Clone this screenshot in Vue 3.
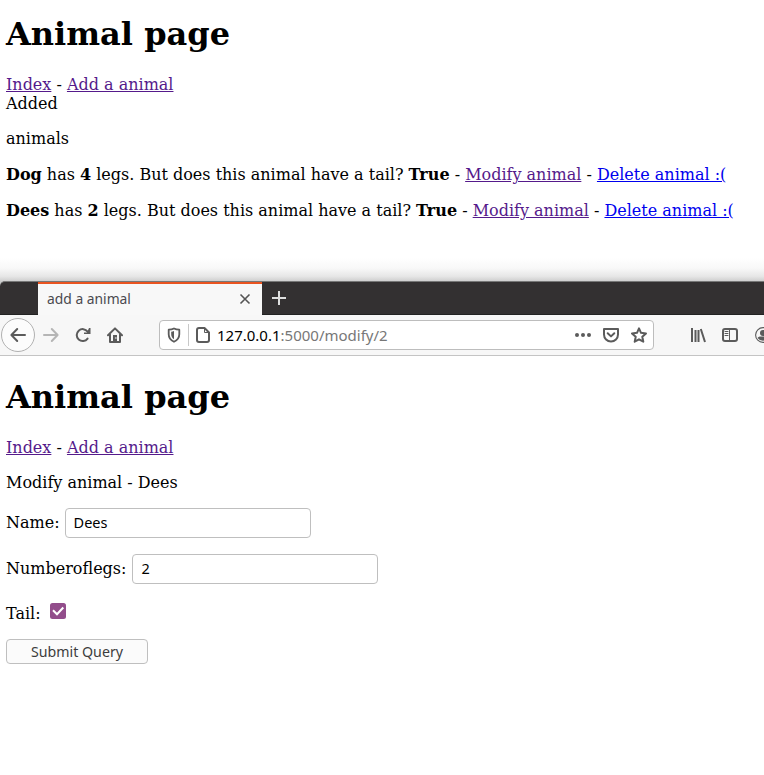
<script setup>
import { ref } from 'vue'

const animals = [
  { name: 'Dog', legs: 4, tail: 'True' },
  { name: 'Dees', legs: 2, tail: 'True' },
]
const name = ref('Dees')
const legs = ref('2')
const tail = ref(true)
</script>

<template>
  <div class="screen">
    <section class="page list-page">
      <h1>Animal page</h1>
      <nav><a class="visited" href="#">Index</a> - <a class="visited" href="#">Add a animal</a></nav>
      <div>Added</div>
      <p class="caption">animals</p>
      <p v-for="a in animals" :key="a.name" class="animal">
        <b>{{ a.name }}</b> has <b>{{ a.legs }}</b> legs. But does this animal have a tail? <b>{{ a.tail }}</b> - <a class="visited" href="#">Modify animal</a> - <a href="#">Delete animal :(</a>
      </p>
    </section>

    <div class="shade"></div>

    <section class="window">
      <header class="tabs">
        <div class="tab">
          <span class="tab-title">add a animal</span>
          <svg class="close" width="12" height="12" viewBox="0 0 12 12"><path d="M1.5 1.5l9 9M10.5 1.5l-9 9" /></svg>
        </div>
        <svg class="plus" width="14" height="14" viewBox="0 0 14 14"><path d="M7 0v14M0 7h14" /></svg>
      </header>

      <div class="toolbar">
        <div class="back">
          <svg class="icon" width="16" height="16" viewBox="0 0 16 16"><path d="M15 8H1.8M7.2 2L1.4 8l5.8 6" /></svg>
        </div>
        <svg class="icon forward" width="16" height="16" viewBox="0 0 16 16"><path d="M1 8h13.2M8.8 2l5.8 6-5.8 6" /></svg>
        <svg class="icon reload" width="16" height="16" viewBox="0 0 16 16"><path d="M12.600 4.600A6 6 0 1 0 12.600 11.600" /><path class="solid" d="M14 1h1.500v6H9V5.500h3z" /></svg>
        <svg class="icon home" width="16" height="16" viewBox="0 0 16 16"><path d="M1 8.2L8 1.4l7 6.8M3 7.5V15h10V7.500" /><path class="solid" d="M6 8h4v6.500H6z" /><path class="dot" d="M8.300 11h1" /></svg>

        <div class="url-bar">
          <svg class="icon shield" width="14" height="16" viewBox="0 0 14 16"><path d="M7 1.500C5.500 2.300 3.500 2.700 1.700 2.700v4.600c0 3.800 2 6 5.300 7.500 3.300-1.500 5.300-3.700 5.300-7.500V2.700C10.500 2.700 8.500 2.300 7 1.500z" /><path class="solid" d="M7 4v8.200C5.100 11 4.200 9.500 4.200 7.300V4.800C5.200 4.700 6.100 4.400 7 4z" /></svg>
          <i class="divider"></i>
          <svg class="icon doc" width="14" height="16" viewBox="0 0 14 16"><path d="M3 1h5.500L13 5.500V13a2 2 0 0 1-2 2H3a2 2 0 0 1-2-2V3a2 2 0 0 1 2-2z" /><path class="thin" d="M8.500 1.200v4.300h4.300" /></svg>
          <span class="url"><span class="host">127.0.0.1</span>:5000/modify/2</span>
          <svg class="icon dots" width="16" height="16" viewBox="0 0 16 16"><circle cx="2" cy="8" r="2" /><circle cx="8" cy="8" r="2" /><circle cx="14" cy="8" r="2" /></svg>
          <svg class="icon pocket" width="16" height="16" viewBox="0 0 16 16"><path d="M1 2h14v5.500a7 7 0 0 1-14 0z" /><path d="M4.700 6.200L8 9.400l3.300-3.200" /></svg>
          <svg class="icon star" width="16" height="16" viewBox="0 0 16 16"><path d="M8 1.300l2 4.500 5 .6-3.700 3.300 1 5L8 12.300l-4.300 2.400 1-5L1 6.400l5-.6z" /></svg>
        </div>

        <svg class="icon library" width="16" height="16" viewBox="0 0 16 16"><path d="M2 1v14M5.500 3v12M8.500 3v12M10.800 2l4.200 13" /></svg>
        <svg class="icon sidebar" width="16" height="16" viewBox="0 0 16 16"><rect x="1" y="2" width="14" height="12" rx="2" /><path class="thin" d="M7.500 2v12M3 4.500h3M3 6.500h3M3 8.500h3" /></svg>
        <svg class="icon account" width="16" height="16" viewBox="0 0 16 16"><circle class="ring" cx="8" cy="8" r="7.400" /><circle class="solid" cx="8" cy="6" r="3" /><path class="solid" d="M2.500 11c1.500-2 3-1.500 5.500-1.500s4 0 5.500 1.500A7 7 0 0 1 2.500 11z" /></svg>
      </div>

      <main class="page form-page">
        <h1>Animal page</h1>
        <nav><a class="visited" href="#">Index</a> - <a class="visited" href="#">Add a animal</a></nav>
        <p class="form-title">Modify animal - Dees</p>
        <form @submit.prevent>
          <label class="field name-field"><span>Name:</span><input v-model="name" class="text" type="text" spellcheck="false"></label>
          <label class="field legs-field"><span>Numberoflegs:</span><input v-model="legs" class="text" type="text"></label>
          <label class="field tail-field">
            <span>Tail:</span>
            <input v-model="tail" class="native" type="checkbox">
            <svg class="check" width="16" height="16" viewBox="0 0 16 16"><rect width="16" height="16" rx="2.500" /><path v-if="tail" d="M3 7.200l4 4 6.300-6.700" /></svg>
          </label>
          <button type="submit">Submit Query</button>
        </form>
      </main>
    </section>
  </div>
</template>

<style>
body {
  margin: 0;
  background: #fff;
}
</style>

<style scoped>
.screen {
  width: 764px;
  height: 775px;
  overflow: hidden;
  background: #fff;
  color: #000;
  font: 16px/19px "DejaVu Serif", serif;
}
.page {
  padding-left: 6px;
}
.list-page {
  height: 258px;
  box-sizing: border-box;
  padding-top: 15px;
}
h1 {
  margin: 0 0 22px;
  font-size: 32px;
  line-height: 38px;
  font-weight: bold;
}
a {
  color: #0000ee;
  text-decoration: underline;
}
a.visited {
  color: #551a8b;
}
p {
  margin: 0;
}
.caption {
  margin-top: 16px;
}
.animal {
  margin-top: 17px;
  white-space: nowrap;
}
.shade {
  height: 23px;
  background: linear-gradient(#fff, #f8f8f8 45%, #e6e6e6 80%, #cfcfcf);
}
.window {
  background: linear-gradient(#cbcbcb 6px, #fff 6px);
}
.tabs {
  display: flex;
  height: 34px;
  box-sizing: border-box;
  padding-left: 38px;
  background: #333031;
  border-top: 1px solid #777;
  border-bottom: 1px solid #222;
  border-top-left-radius: 5px;
}
.tab {
  display: flex;
  align-items: center;
  flex: none;
  width: 224px;
  height: 33px;
  box-sizing: border-box;
  padding: 0 11px 0 9px;
  border-top: 2px solid #e95420;
  background: #f8f8f8;
}
.tab-title {
  flex: 1;
  margin-top: -1px;
  color: #4a4a4f;
  font: 13.850px/20px "Noto Sans", sans-serif;
}
.close {
  margin-top: -1px;
  stroke: #555;
  stroke-width: 1.6;
}
.plus {
  margin: 9px 0 0 10px;
  stroke: #dedede;
  stroke-width: 2;
}
.toolbar {
  display: flex;
  align-items: center;
  height: 41px;
  box-sizing: border-box;
  overflow: hidden;
  border-bottom: 1px solid #c4c4c4;
  background: #f7f7f7;
}
.back {
  display: flex;
  align-items: center;
  justify-content: center;
  flex: none;
  width: 34px;
  height: 34px;
  margin-left: 1px;
  box-sizing: border-box;
  border: 1px solid #b1b1b1;
  border-radius: 50%;
  background: #fcfcfc;
}
.icon {
  flex: none;
  fill: none;
  stroke: #5b5b5b;
  stroke-width: 2;
  stroke-linecap: round;
  stroke-linejoin: round;
}
.solid {
  fill: #5b5b5b;
  stroke: none;
}
.thin {
  stroke-width: 1;
}
.dot {
  stroke: #f6f6f6;
  stroke-width: 1;
}
.forward {
  margin-left: 8px;
  stroke: #b5b5b5;
}
.reload,
.home {
  margin-left: 16px;
}
.url-bar {
  display: flex;
  align-items: center;
  flex: none;
  width: 495px;
  height: 30px;
  margin-left: 36px;
  box-sizing: border-box;
  padding: 0 6px 0 7px;
  border: 1px solid #bdbdbd;
  border-radius: 4px;
  background: #fff;
}
.shield {
  stroke-width: 1.8;
}
.divider {
  width: 1px;
  height: 22px;
  margin: 0 7px;
  background: #c8c8c8;
}
.url {
  flex: 1;
  margin-left: 7px;
  color: #777;
  font: 15px/22px "Noto Sans", sans-serif;
}
.host {
  color: #000;
}
.dots circle {
  fill: #5b5b5b;
  stroke: none;
}
.pocket,
.star {
  margin-left: 12px;
}
.library {
  margin-left: 36px;
  stroke-linecap: butt;
}
.sidebar {
  margin-left: 16px;
}
.account {
  margin-left: 17px;
}
.account .ring {
  stroke-width: 1.1;
}
.form-page {
  padding-top: 22px;
}
.form-title {
  margin-top: 16px;
}
.field {
  display: flex;
  align-items: center;
  height: 30px;
}
.name-field,
.legs-field {
  margin-top: 16px;
}
.name-field span,
.legs-field span {
  margin-top: -2px;
}
.text {
  width: 246px;
  height: 30px;
  box-sizing: border-box;
  margin: 0 0 0 5px;
  padding: 0 8px 2px;
  border: 1px solid #bfbfbf;
  border-radius: 4px;
  background: #fff;
  color: #000;
  font: 14.500px/20px "Noto Sans", sans-serif;
  outline: none;
}
.legs-field .text {
  margin-left: 6px;
}
.tail-field {
  height: 19px;
  margin-top: 20px;
}
.native {
  position: absolute;
  opacity: 0;
}
.check {
  margin: -5px 0 0 9px;
  fill: #924d8b;
}
.check path {
  fill: none;
  stroke: #fff;
  stroke-width: 2;
}
button {
  display: block;
  width: 142px;
  height: 25px;
  margin: 16px 0 0;
  padding: 0;
  border: 1px solid #bfbfbf;
  border-radius: 4px;
  background: #fbfbfb;
  color: #3d3d3d;
  font: 14.200px/20px "Noto Sans", sans-serif;
}
</style>
